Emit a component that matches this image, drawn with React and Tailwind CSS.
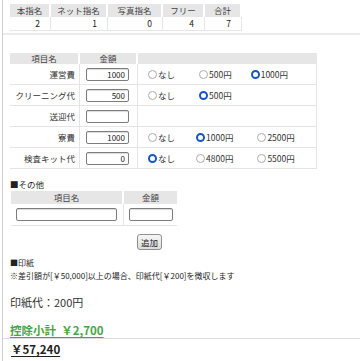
import React from "react";

const F = { fontFamily: '"Noto Sans CJK JP", "Noto Sans", sans-serif' };

function Radio({ checked }) {
  return checked ? (
    <span className="inline-block w-[9px] h-[9px] rounded-full border-[2.5px] border-[#1656c4] bg-white shrink-0" />
  ) : (
    <span className="inline-block w-[9px] h-[9px] rounded-full border border-[#ababab] bg-white shrink-0" />
  );
}

function Opt({ checked, label, mr }) {
  return (
    <span className={`flex items-center gap-[1px] ${mr}`}>
      <Radio checked={checked} />
      <span className="text-[8.5px] text-[#333]">{label}</span>
    </span>
  );
}

function Amount({ value, w = "w-[43px]" }) {
  return (
    <input
      readOnly
      value={value}
      style={F}
      className={`${w} h-[13px] border border-[#7d7d7d] rounded-[2px] bg-white text-right pr-[3px] text-[8px] leading-[11px] text-[#222] shadow-[inset_0_1px_1px_rgba(0,0,0,0.15)] outline-none`}
    />
  );
}

const rows = [
  {
    label: "運営費",
    value: "1000",
    opts: [
      { label: "なし", mr: "mr-[24px]" },
      { label: "500円", mr: "mr-[19px]" },
      { label: "1000円", checked: true },
    ],
  },
  {
    label: "クリーニング代",
    value: "500",
    opts: [
      { label: "なし", mr: "mr-[24px]" },
      { label: "500円", checked: true },
    ],
  },
  { label: "送迎代", value: "", opts: [] },
  {
    label: "寮費",
    value: "1000",
    opts: [
      { label: "なし", mr: "mr-[21px]" },
      { label: "1000円", checked: true, mr: "mr-[24px]" },
      { label: "2500円" },
    ],
  },
  {
    label: "検査キット代",
    value: "0",
    opts: [
      { label: "なし", checked: true, mr: "mr-[21px]" },
      { label: "4800円", mr: "mr-[24px]" },
      { label: "5500円" },
    ],
  },
];

export default function App() {
  const topCols = [
    { h: "本指名", v: "2", w: "w-[41px]" },
    { h: "ネット指名", v: "1", w: "w-[57px]" },
    { h: "写真指名", v: "0", w: "w-[55px]" },
    { h: "フリー", v: "4", w: "w-[42px]" },
    { h: "合計", v: "7", w: "w-[37px]" },
  ];
  return (
    <div style={F} className="w-[360px] h-[361px] overflow-hidden bg-white text-[#333]">
      <div className="ml-[2px] h-full border-l border-[#cfcfcf] flex flex-col">
        {/* top summary */}
        <div className="pt-[4px] pl-[7px] flex">
          {topCols.map((c, i) => (
            <div key={i} className={`${c.w} flex flex-col`}>
              <div className="h-[13px] bg-[#e6e6e6] border-r-2 border-white flex items-center justify-center text-[8.5px] text-[#444]">
                {c.h}
              </div>
              <div className="h-[14px] border-b border-r border-[#e6e6e6] flex items-center justify-end pr-[10px] text-[8.5px] text-[#222]">
                {c.v}
              </div>
            </div>
          ))}
        </div>
        <div className="mt-[2px] h-[2px] bg-[#ebebeb]" />

        {/* fees table */}
        <div className="mt-[18px] ml-[7px] w-[307px] flex flex-col">
          <div className="flex h-[11px]">
            <div className="w-[70px] bg-[#e6e6e6] border-r-2 border-white flex items-center justify-center text-[8.5px] text-[#444]">
              項目名
            </div>
            <div className="w-[58px] bg-[#e6e6e6] border-r-2 border-white flex items-center justify-center text-[8.5px] text-[#444]">
              金額
            </div>
            <div className="flex-1 bg-[#e6e6e6]" />
          </div>
          {rows.map((r, i) => (
            <div key={i} className="flex h-[21px] border-b border-[#e4e4e4]">
              <div className="w-[70px] border-r border-[#e4e4e4] flex items-center justify-end pr-[4px] text-[8.5px] text-[#333]">
                {r.label}
              </div>
              <div className="w-[58px] border-r border-[#e4e4e4] flex items-center pl-[6px]">
                <Amount value={r.value} />
              </div>
              <div className="flex-1 border-r border-[#e4e4e4] flex items-center pl-[10px]">
                {r.opts.map((o, j) => (
                  <Opt key={j} label={o.label} checked={o.checked} mr={o.mr || ""} />
                ))}
              </div>
            </div>
          ))}
        </div>

        {/* other */}
        <div className="mt-[10px] ml-[7px] h-[10px] flex items-center text-[8.5px] text-[#222]">
          ■その他
        </div>
        <div className="mt-[2px] ml-[8px] flex flex-col w-[166px]">
          <div className="flex h-[13px]">
            <div className="w-[113px] bg-[#e6e6e6] border-r-2 border-white flex items-center justify-center text-[8.5px] text-[#444]">
              項目名
            </div>
            <div className="flex-1 bg-[#e6e6e6] flex items-center justify-center text-[8.5px] text-[#444]">
              金額
            </div>
          </div>
          <div className="flex h-[22px] border-b border-[#e4e4e4]">
            <div className="w-[113px] border-r border-[#e4e4e4] flex items-center pl-[5px]">
              <Amount value="" w="w-[101px]" />
            </div>
            <div className="flex-1 flex items-center pl-[5px]">
              <Amount value="" w="w-[44px]" />
            </div>
          </div>
        </div>
        <div className="mt-[8px] ml-[134px] flex h-[16px]">
          <button
            style={F}
            className="w-[25px] h-[16px] rounded-[3px] border border-[#8f8f8f] bg-gradient-to-b from-[#f6f6f6] to-[#dcdcdc] text-[8.5px] leading-[14px] text-[#222] p-0"
          >
            追加
          </button>
        </div>

        {/* stamp */}
        <div className="mt-[8px] ml-[7px] h-[10px] flex items-center text-[8px] text-[#222]">■印紙</div>
        <div className="mt-[3px] ml-[7px] h-[10px] flex items-center text-[8px] text-[#222] whitespace-nowrap">
          ※差引額が[￥50,000]以上の場合、印紙代[￥200]を徴収します
        </div>
        <div className="mt-[14px] ml-[7px] h-[14px] flex items-center text-[11px] text-[#333]">印紙代：200円</div>
        <div className="mt-[15px] ml-[7px] h-[14px] flex items-center text-[11.5px] font-bold text-[#47a547] underline underline-offset-2">
          控除小計&nbsp;&nbsp;￥2,700
        </div>
        <div className="h-[1px] bg-[#dcdcdc]" />
        <div className="mt-[4px] ml-[8px] h-[14px] flex items-center text-[11.5px] font-bold text-[#222] underline underline-offset-2">
          ￥57,240
        </div>
      </div>
    </div>
  );
}
